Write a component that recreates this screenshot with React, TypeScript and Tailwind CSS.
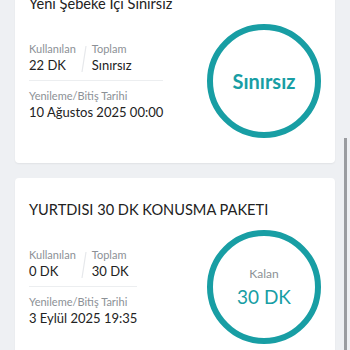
import React from "react";

type Pkg = {
  title: string;
  used: string;
  total: string;
  date: string;
  label?: string;
  value: string;
};

const packages: Pkg[] = [
  {
    title: "Yeni Şebeke İçi Sınırsız",
    used: "22 DK",
    total: "Sınırsız",
    date: "10 Ağustos 2025 00:00",
    value: "Sınırsız",
  },
  {
    title: "YURTDISI 30 DK KONUSMA PAKETI",
    used: "0 DK",
    total: "30 DK",
    date: "3 Eylül 2025 19:35",
    label: "Kalan",
    value: "30 DK",
  },
];

function PackageCard({ p }: { p: Pkg }) {
  return (
    <div className="rounded-[4px] bg-white px-[14px] pb-[25px] pt-[22px] shadow-[0_1px_2px_rgba(0,0,0,0.06)]">
      <div className="text-[14.6px] leading-[20px] text-[#222]">{p.title}</div>
      <div className="mt-[10px] flex items-center justify-between">
        <div className="w-fit">
          <div className="flex items-stretch border-b border-[#eceef0] pb-[6px]">
            <div>
              <div className="text-[11px] leading-[14px] text-[#8c9196]">Kullanılan</div>
              <div className="text-[13px] leading-[18px] text-[#222]">{p.used}</div>
            </div>
            <svg width="16" height="32" viewBox="0 0 16 32">
              <line x1="10" y1="4" x2="6" y2="30" stroke="#e6e8eb" strokeWidth="1.2" />
            </svg>
            <div>
              <div className="text-[11px] leading-[14px] text-[#8c9196]">Toplam</div>
              <div className="text-[13px] leading-[18px] text-[#222]">{p.total}</div>
            </div>
          </div>
          <div className="pt-[8px]">
            <div className="text-[11px] leading-[14px] text-[#8c9196]">Yenileme/Bitiş Tarihi</div>
            <div className="text-[13px] leading-[18px] text-[#222]">{p.date}</div>
          </div>
        </div>
        <div className="mr-[0px] flex h-[114px] w-[114px] shrink-0 flex-col items-center justify-center rounded-full border-[6px] border-[#189ea4]">
          {p.label ? (
            <>
              <div className="text-[12px] leading-[16px] text-[#8c9196]">{p.label}</div>
              <div className="mt-[3px] text-[19px] leading-[24px] text-[#189ea4]">{p.value}</div>
            </>
          ) : (
            <div className="text-[20px] font-bold leading-[24px] text-[#189ea4]">{p.value}</div>
          )}
        </div>
      </div>
    </div>
  );
}

export default function App() {
  return (
    <div
      className="relative h-[350px] w-[350px] overflow-hidden bg-[#eef0f3]"
      style={{ fontFamily: "Lato, 'Noto Sans', sans-serif" }}
    >
      <div className="-mt-[28px] flex flex-col gap-[15px] px-[15px]">
        {packages.map((p) => (
          <PackageCard key={p.title} p={p} />
        ))}
      </div>
      <div className="absolute left-[344px] top-[138px] h-[212px] w-[3px] bg-[#9a9ca0]" />
    </div>
  );
}
